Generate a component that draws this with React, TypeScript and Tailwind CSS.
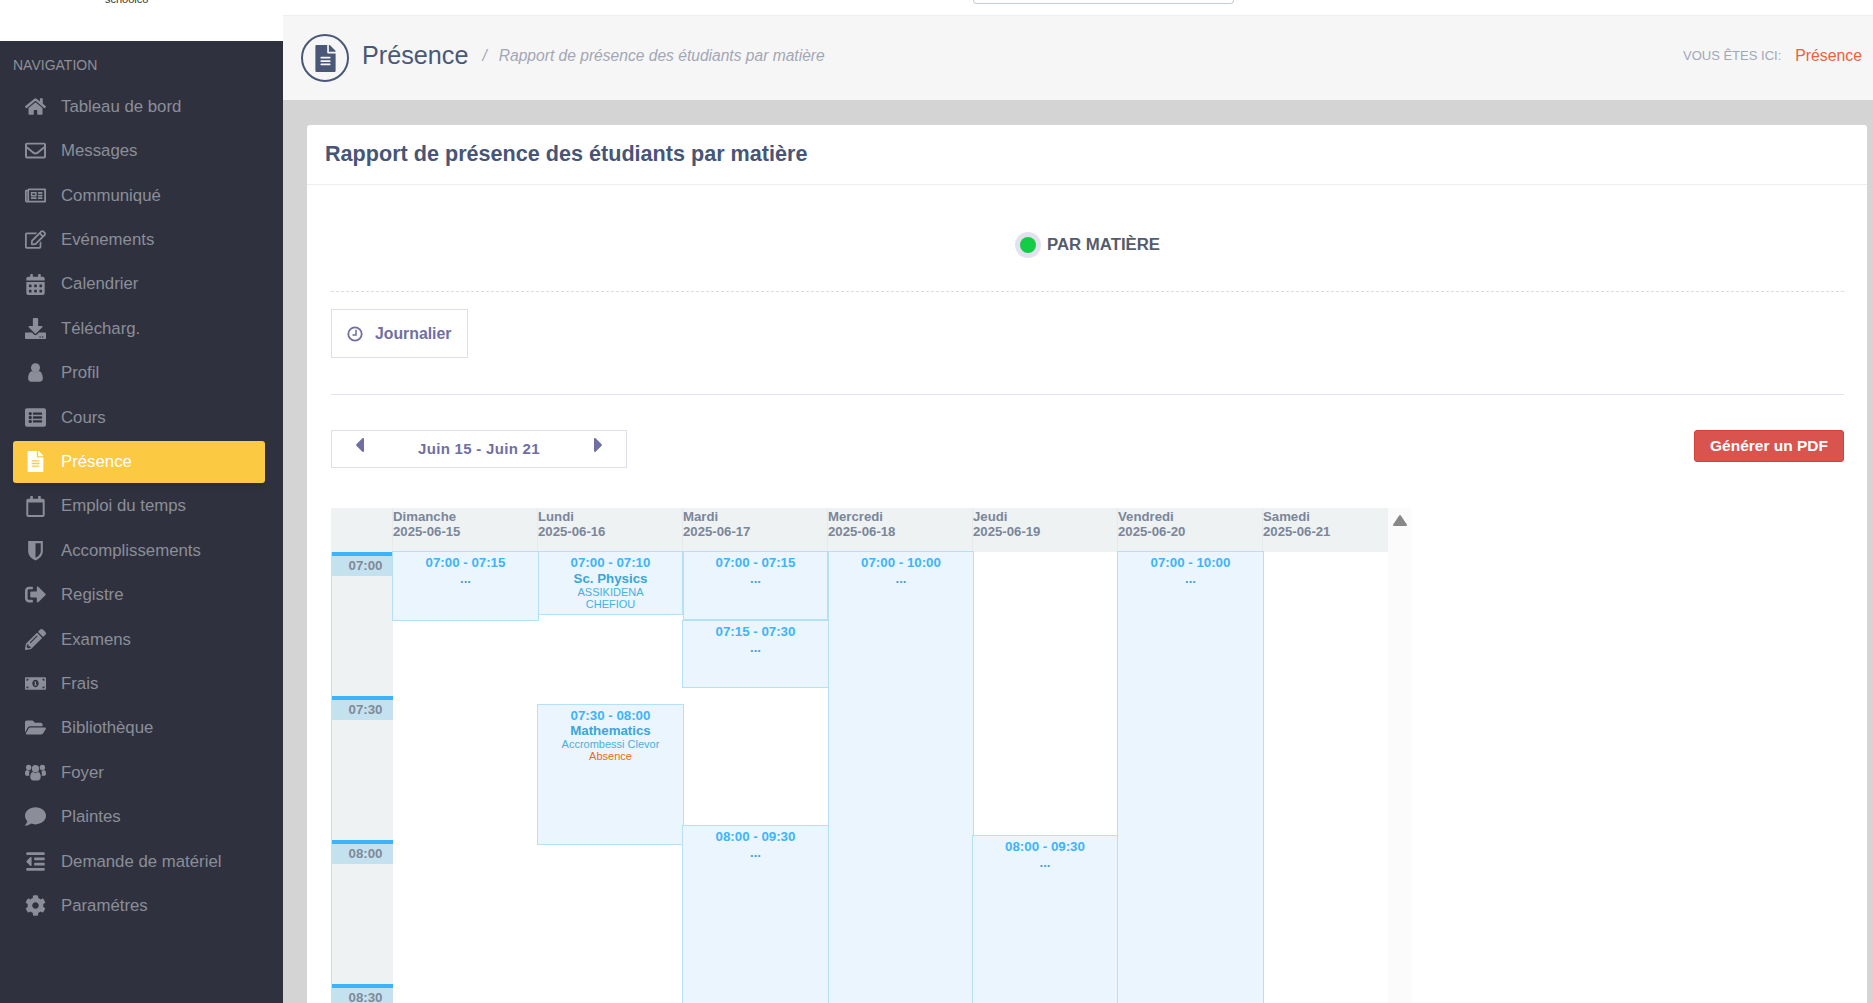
import type { ComponentType } from "react"
import {
  FaHome, FaRegEnvelope, FaRegNewspaper, FaRegEdit, FaCalendarAlt, FaDownload, FaListAlt,
  FaFileAlt, FaRegCalendar, FaSignOutAlt, FaPencilAlt, FaMoneyBillAlt, FaFolderOpen,
  FaComment, FaOutdent, FaCog, FaCaretLeft, FaCaretRight,
} from "react-icons/fa"

type IconProps = { className?: string }

function UserIcon({ className }: IconProps) {
  return (
    <svg viewBox="0 0 20 20" fill="currentColor" className={className}>
      <circle cx="10" cy="5.5" r="4.3" />
      <path d="M3 15.5c0-4 2-7 4-7 1 .8 2 1.2 3 1.2s2-.4 3-1.2c2 0 4 3 4 7 0 2-1.2 3.2-3 3.2H6c-1.8 0-3-1.2-3-3.2z" />
    </svg>
  )
}

function ShieldIcon({ className }: IconProps) {
  return (
    <svg viewBox="0 0 20 20" fill="currentColor" className={className}>
      <path
        fillRule="evenodd"
        d="M3 1h14v9.5c0 4.5-3.500 7.500-7 9-3.500-1.500-7-4.500-7-9zM10 3v14c2.500-1.300 5-3.500 5-6.500V3z"
      />
    </svg>
  )
}

function UsersIcon({ className }: IconProps) {
  return (
    <svg viewBox="0 0 22 20" fill="currentColor" className={className}>
      <circle cx="11" cy="6" r="3.8" />
      <circle cx="3.8" cy="4.800" r="2.800" />
      <circle cx="18.200" cy="4.800" r="2.800" />
      <path d="M5.500 14.500c0-3 1.500-5 3-5 .8.600 1.600 1 2.500 1s1.700-.4 2.500-1c1.500 0 3 2 3 5 0 2.500-1.500 4-3 4h-5c-1.500 0-3-1.500-3-4z" />
      <path d="M0 11c0-2 .8-3.500 2-3.500.6.500 1.200.7 2 .7.300 0 .6 0 .9-.1-.4 1-.6 2-.6 2.900 0 .6 0 1.500.4 2.500H2c-1.200 0-2-.8-2-2.500z" />
      <path d="M22 11c0-2-.8-3.500-2-3.500-.6.500-1.200.7-2 .7-.3 0-.6 0-.9-.1.4 1 .6 2 .6 2.900 0 .6 0 1.500-.4 2.500H20c1.200 0 2-.8 2-2.500z" />
    </svg>
  )
}

function ClockIcon({ className }: IconProps) {
  return (
    <svg viewBox="0 0 16 16" fill="none" stroke="currentColor" className={className}>
      <circle cx="8" cy="8" r="6.7" strokeWidth="1.800" />
      <path d="M9 3.800V9H5.500" strokeWidth="1.500" />
    </svg>
  )
}

const menu: { label: string; icon: ComponentType<IconProps>; active?: boolean }[] = [
  { label: "Tableau de bord", icon: FaHome },
  { label: "Messages", icon: FaRegEnvelope },
  { label: "Communiqué", icon: FaRegNewspaper },
  { label: "Evénements", icon: FaRegEdit },
  { label: "Calendrier", icon: FaCalendarAlt },
  { label: "Télécharg.", icon: FaDownload },
  { label: "Profil", icon: UserIcon },
  { label: "Cours", icon: FaListAlt },
  { label: "Présence", icon: FaFileAlt, active: true },
  { label: "Emploi du temps", icon: FaRegCalendar },
  { label: "Accomplissements", icon: ShieldIcon },
  { label: "Registre", icon: FaSignOutAlt },
  { label: "Examens", icon: FaPencilAlt },
  { label: "Frais", icon: FaMoneyBillAlt },
  { label: "Bibliothèque", icon: FaFolderOpen },
  { label: "Foyer", icon: UsersIcon },
  { label: "Plaintes", icon: FaComment },
  { label: "Demande de matériel", icon: FaOutdent },
  { label: "Paramétres", icon: FaCog },
]

interface Slot {
  time: string
  pos: string
  subject?: string
  teacher?: string[]
  absence?: boolean
}

const days: { name: string; date: string; width: string; slots: Slot[] }[] = [
  {
    name: "Dimanche", date: "2025-06-15", width: "w-[145px]",
    slots: [{ time: "07:00 - 07:15", pos: "-left-px w-[147px] -top-px h-[70px]" }],
  },
  {
    name: "Lundi", date: "2025-06-16", width: "w-[145px]",
    slots: [
      { time: "07:00 - 07:10", pos: "left-0 w-[145px] -top-px h-[64px]", subject: "Sc. Physics", teacher: ["ASSIKIDENA", "CHEFIOU"] },
      { time: "07:30 - 08:00", pos: "-left-px w-[147px] top-[152px] h-[141px]", subject: "Mathematics", teacher: ["Accrombessi Clevor"], absence: true },
    ],
  },
  {
    name: "Mardi", date: "2025-06-17", width: "w-[145px]",
    slots: [
      { time: "07:00 - 07:15", pos: "left-0 w-[145px] -top-px h-[69px]" },
      { time: "07:15 - 07:30", pos: "-left-px w-[147px] top-[68px] h-[68px]" },
      { time: "08:00 - 09:30", pos: "-left-px w-[147px] top-[273px] h-[300px]" },
    ],
  },
  {
    name: "Mercredi", date: "2025-06-18", width: "w-[145px]",
    slots: [{ time: "07:00 - 10:00", pos: "left-0 w-[146px] -top-px h-[600px]" }],
  },
  {
    name: "Jeudi", date: "2025-06-19", width: "w-[145px]",
    slots: [{ time: "08:00 - 09:30", pos: "-left-px w-[146px] top-[283px] h-[300px]" }],
  },
  {
    name: "Vendredi", date: "2025-06-20", width: "w-[145px]",
    slots: [{ time: "07:00 - 10:00", pos: "-left-px w-[147px] -top-px h-[600px]" }],
  },
  { name: "Samedi", date: "2025-06-21", width: "w-[125px]", slots: [] },
]

const hours = ["07:00", "07:30", "08:00", "08:30"]

function Sidebar() {
  return (
    <aside className="w-[283px] shrink-0 flex flex-col">
      <div className="h-[41px] bg-white overflow-hidden pl-[105px]">
        <div className="-mt-[7px] text-[11px] leading-[12px] text-[#333]">schoolco</div>
      </div>
      <nav className="flex-1 bg-[#2f323e]">
        <div className="pl-[13px] pt-[15px] h-[44.5px] text-[14px] leading-[18px] text-[#8d9099]">NAVIGATION</div>
        {menu.map((item) => (
          <div
            key={item.label}
            className={
              item.active
                ? "ml-[13px] mr-[18px] h-[42px] mb-[2.4px] flex items-center rounded-[3px] bg-[#fbc942] text-white shadow-md"
                : "ml-[13px] mr-[18px] h-[42px] mb-[2.4px] flex items-center text-[#8b8e99]"
            }
          >
            <div className="w-[48px] pl-[12px] shrink-0">
              <item.icon className="w-[21px] h-[21px]" />
            </div>
            <span className="text-[16.8px]">{item.label}</span>
          </div>
        ))}
      </nav>
    </aside>
  )
}

function Header() {
  return (
    <>
      <div className="h-[16px] bg-white border-b border-[#eeeeee]">
        <div className="ml-[690px] w-[261px] h-[4px] border border-t-0 border-[#c5cdd9] rounded-b-sm" />
      </div>
      <div className="h-[84px] bg-[#f6f6f6] flex items-center pl-[18px] pr-[11px]">
        <div className="w-[48px] h-[48px] rounded-full border-2 border-[#4a5878] flex items-center justify-center mr-[13px]">
          <FaFileAlt className="w-[21px] h-[27px] text-[#4a5878]" />
        </div>
        <div className="flex-1 flex items-center pb-[4px]">
          <h1 className="text-[25.2px] text-[#4a5878]">Présence</h1>
          <span className="ml-[14px] text-[15.6px] italic text-[#a2a6b5]">/</span>
          <span className="ml-[12px] text-[15.6px] italic text-[#a2a6b5]">Rapport de présence des étudiants par matière</span>
          <span className="ml-auto text-[13px] text-[#a0a8ba]">VOUS ÊTES ICI:</span>
          <span className="ml-[14px] text-[15.8px] text-[#f0603a]">Présence</span>
        </div>
      </div>
    </>
  )
}

function Event({ slot }: { slot: Slot }) {
  return (
    <div className={`absolute ${slot.pos} border border-[#b5e0fa] bg-[#eaf5fe] text-center z-10`}>
      <div className="mt-[3px] text-[13.3px] leading-[16px] font-bold text-[#3db4fc]">{slot.time}</div>
      {slot.subject ? (
        <>
          <div className={slot.absence ? "text-[13.3px] leading-[14px] font-bold text-[#3aa6d8]" : "text-[13.3px] leading-[15px] font-bold text-[#3aa6d8]"}>
            {slot.subject}
          </div>
          {slot.teacher?.map((t) => (
            <div key={t} className="text-[11px] leading-[12px] text-[#48b0e0]">{t}</div>
          ))}
          {slot.absence && <div className="text-[11px] leading-[12px] text-[#f06a10]">Absence</div>}
        </>
      ) : (
        <div className="text-[13.3px] leading-[15px] font-bold text-[#4a9fdc]">...</div>
      )}
    </div>
  )
}

function Calendar() {
  return (
    <div className="mt-[40px] flex">
      <div className="w-[1057px] shrink-0">
        <div className="h-[44px] bg-[#eff2f3] flex pl-[61px]">
          {days.map((d) => (
            <div key={d.name} className={`${d.width} pt-[1px] text-[13.2px] leading-[15px] font-bold text-[#7a8699] border-l border-[#e6eaeb]`}>
              <div>{d.name}</div>
              <div>{d.date}</div>
            </div>
          ))}
        </div>
        <div className="flex">
          <div className="w-[62px] shrink-0 border-l border-[#d5dbe0] bg-[#eff2f3]">
            {hours.map((h) => (
              <div key={h} className="h-[144px]">
                <div className="h-[4px] bg-[#3cb3fd]" />
                <div className="h-[20px] bg-[#c4e1ef] text-[13.3px] leading-[20px] font-bold text-[#7e8a99] text-center pl-[6px]">{h}</div>
              </div>
            ))}
          </div>
          {days.map((d) => (
            <div key={d.name} className={`${d.width} relative`}>
              {d.slots.map((s) => (
                <Event key={s.time} slot={s} />
              ))}
            </div>
          ))}
        </div>
      </div>
      <div className="w-[23px] bg-[#fbfbfb] flex justify-center pt-[6px]">
        <svg viewBox="0 0 16 12" className="w-[16px] h-[12px] text-[#888888]" fill="currentColor" stroke="currentColor" strokeLinejoin="round" strokeWidth="2">
          <path d="M8 2 2 11h12z" />
        </svg>
      </div>
    </div>
  )
}

export default function App() {
  return (
    <div className="h-[1003px] overflow-hidden flex bg-[#2f323e] font-['Liberation_Sans',Arial,sans-serif]">
      <Sidebar />
      <main className="flex-1 min-w-0 bg-[#d4d4d4] overflow-hidden">
        <Header />
        <div className="mt-[25px] ml-[24px] mr-[6px] bg-white rounded-t-[3px]">
          <div className="h-[60px] border-b border-[#eeeeee] flex items-center pl-[18px]">
            <h2 className="text-[21.6px] font-bold text-[#475577]">Rapport de présence des étudiants par matière</h2>
          </div>
          <div className="pl-[24px] pr-[23px]">
            <div className="h-[107px] border-b border-dashed border-[#dcdce6] flex items-center justify-center pt-[13px]">
              <div className="w-[26px] h-[26px] rounded-full bg-[#e2e2ee] flex items-center justify-center">
                <div className="w-[16px] h-[16px] rounded-full bg-[#14cc45]" />
              </div>
              <span className="ml-[6px] text-[16.8px] font-bold text-[#545c6b]">PAR MATIÈRE</span>
            </div>
            <div className="h-[103px] border-b border-[#e4e2ec] pt-[17px]">
              <div className="w-[137px] h-[49px] border border-[#e0deec] flex items-center pl-[15px] text-[#6f6fa3]">
                <ClockIcon className="w-[16px] h-[16px]" />
                <span className="ml-[12px] text-[15.8px] font-bold">Journalier</span>
              </div>
            </div>
            <div className="pt-[35px] flex items-start justify-between">
              <div className="w-[296px] h-[38px] border border-[#e0deec] flex items-center justify-between pl-[19px] pr-[19px] text-[#6f6fa3]">
                <FaCaretLeft className="w-[17px] h-[24px] -mt-[8px]" />
                <span className="text-[15px] font-bold tracking-[0.3px]">Juin 15 - Juin 21</span>
                <FaCaretRight className="w-[17px] h-[24px] -mt-[8px]" />
              </div>
              <button className="w-[150px] h-[32px] rounded-[3px] bg-[#d9534f] border border-[#d43f3a] text-white text-[15.5px] font-bold">
                Générer un PDF
              </button>
            </div>
            <Calendar />
          </div>
        </div>
      </main>
    </div>
  )
}
